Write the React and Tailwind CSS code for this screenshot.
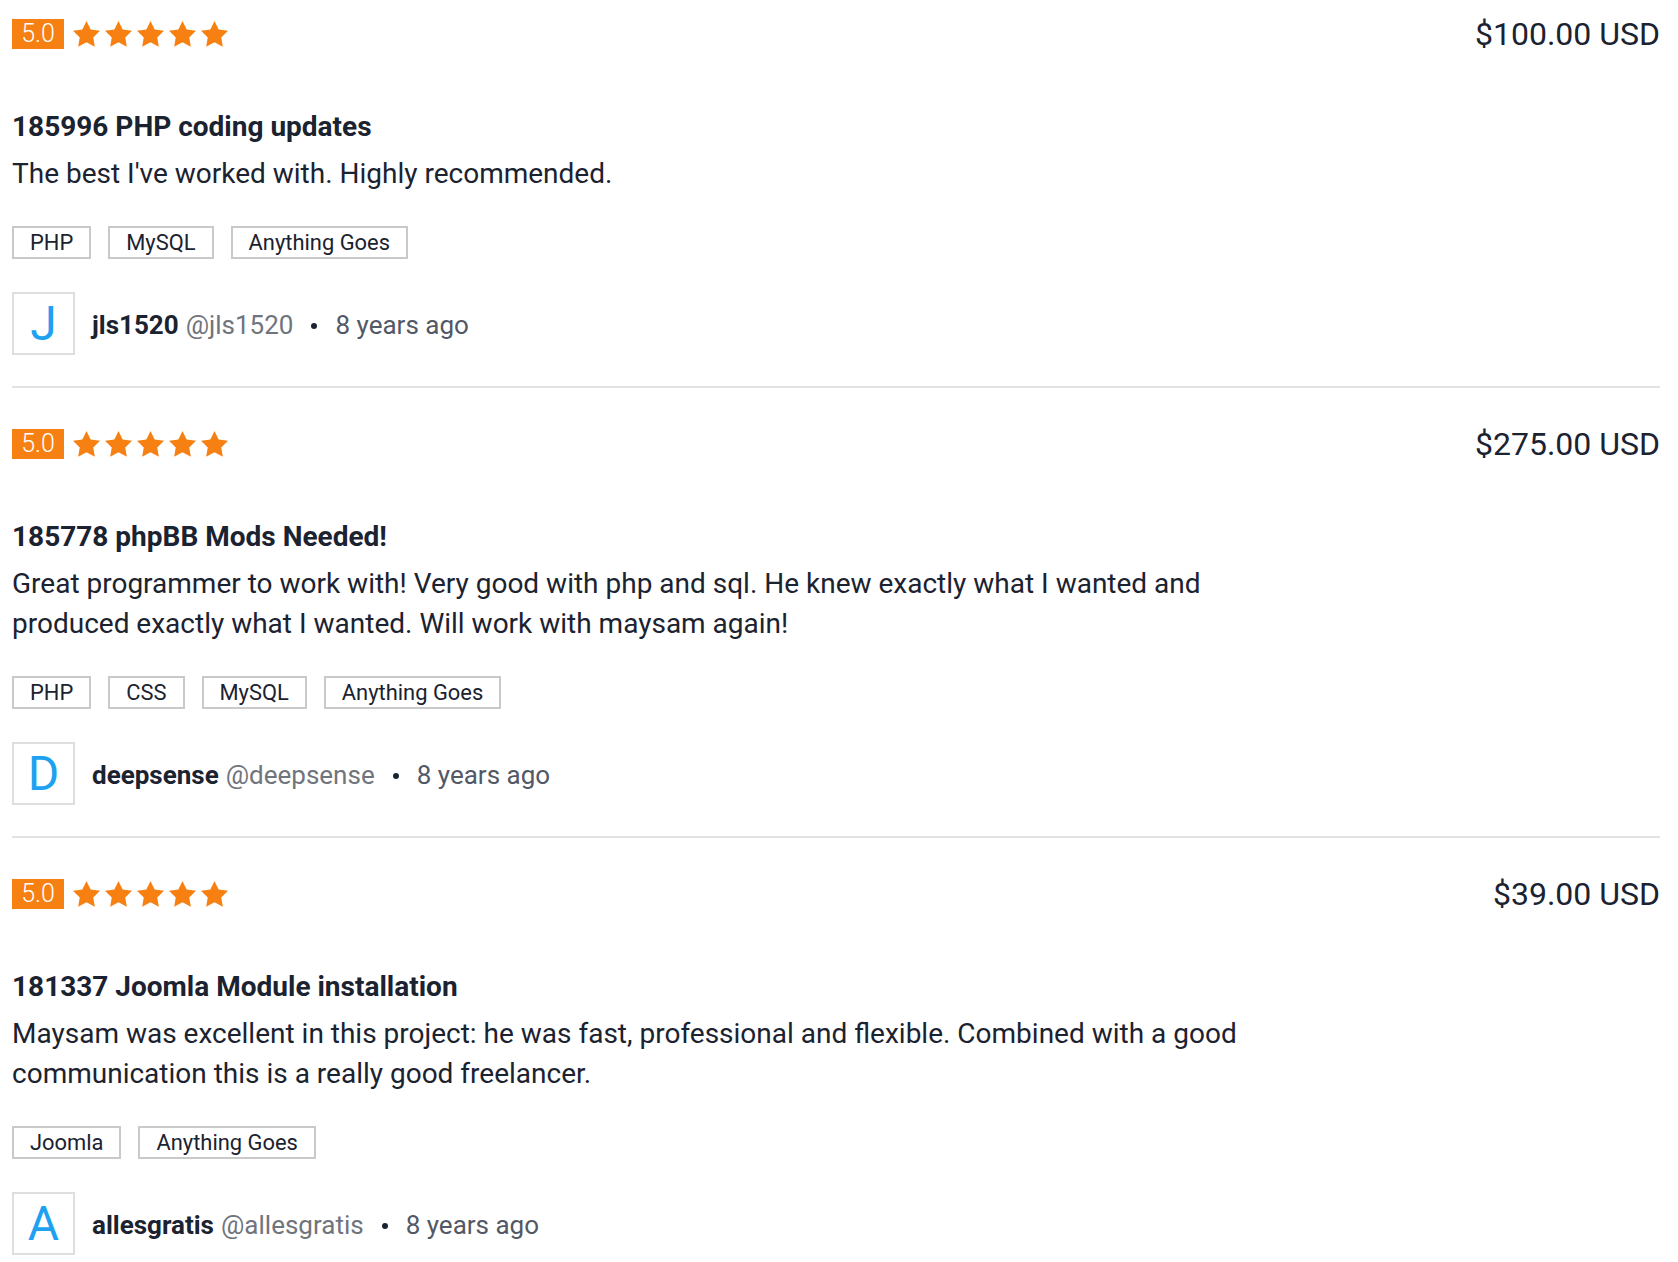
import React from 'react';

const reviews = [
  {
    price: '$100.00 USD',
    title: '185996 PHP coding updates',
    body: "The best I've worked with. Highly recommended.",
    tags: ['PHP', 'MySQL', 'Anything Goes'],
    name: 'jls1520',
    letter: 'J',
  },
  {
    price: '$275.00 USD',
    title: '185778 phpBB Mods Needed!',
    body: 'Great programmer to work with! Very good with php and sql. He knew exactly what I wanted and produced exactly what I wanted. Will work with maysam again!',
    tags: ['PHP', 'CSS', 'MySQL', 'Anything Goes'],
    name: 'deepsense',
    letter: 'D',
  },
  {
    price: '$39.00 USD',
    title: '181337 Joomla Module installation',
    body: 'Maysam was excellent in this project: he was fast, professional and flexible. Combined with a good communication this is a really good freelancer.',
    tags: ['Joomla', 'Anything Goes'],
    name: 'allesgratis',
    letter: 'A',
  },
];

const Star = () => (
  <svg width="27" height="26" viewBox="2 2 20 19.2" fill="#f78012">
    <polygon points="12,2 15.09,8.26 22,9.27 17,14.14 18.18,21.02 12,17.77 5.82,21.02 7,14.14 2,9.27 8.91,8.26" />
  </svg>
);

const Review = ({ review, first, last }) => (
  <div className={`${first ? 'pt-[10px]' : 'pt-[32px]'} pb-[31px] ${last ? '' : 'border-b-2 border-[#e2e2e2]'}`}>
    <div className="flex items-center justify-between h-[48px]">
      <div className="flex items-center">
        <span className="w-[52px] h-[30px] bg-[#f78012] text-white text-[25px] leading-[30px] font-light text-center">
          5.0
        </span>
        <div className="flex items-center gap-[5px] ml-[9px]">
          {[0, 1, 2, 3, 4].map(i => <Star key={i} />)}
        </div>
      </div>
      <span className="text-[32px] text-[#1b2230] leading-[48px]">{review.price}</span>
    </div>

    <h3 className="mt-[51px] text-[28px] leading-[36px] font-bold text-[#1b2230]">{review.title}</h3>
    <p className="mt-[9px] text-[28px] leading-[40px] text-[#1b2230] max-w-[1270px]">{review.body}</p>

    <div className="flex gap-[17px] mt-[32px]">
      {review.tags.map(tag => (
        <span key={tag} className="border-2 border-[#c9c9c9] px-[16px] h-[33px] text-[21.9px] leading-[29px] text-[#1b2230]">
          {tag}
        </span>
      ))}
    </div>

    <div className="flex items-center mt-[33px]">
      <div className="w-[63px] h-[63px] border-2 border-[#dedede] flex items-center justify-center text-[48px] text-[#1ea1f1]">
        {review.letter}
      </div>
      <div className="flex items-center mt-[4px] text-[26px]">
        <span className="ml-[17px] font-bold text-[#1b2230]">{review.name}</span>
        <span className="ml-[7px] text-[#70747c]">@{review.name}</span>
        <span className="mx-[18px] w-[6px] h-[6px] rounded-full bg-[#1b2230]" />
        <span className="text-[#525866]">8 years ago</span>
      </div>
    </div>
  </div>
);

export default function App() {
  return (
    <div className="min-h-screen bg-white pl-[12px] pr-[18px]" style={{ fontFamily: 'Roboto, "Liberation Sans", sans-serif' }}>
      {reviews.map((r, i) => (
        <Review key={i} review={r} first={i === 0} last={i === reviews.length - 1} />
      ))}
    </div>
  );
}
